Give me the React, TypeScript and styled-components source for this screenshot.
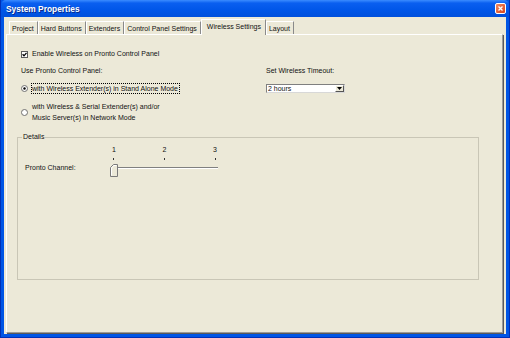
import React from "react";
import styled, { createGlobalStyle } from "styled-components";

const GlobalStyle = createGlobalStyle`
  html, body {
    margin: 0;
    padding: 0;
    width: 510px;
    height: 338px;
    overflow: hidden;
    background: #ece9d8;
  }
  body {
    font-family: "Liberation Sans", Arial, sans-serif;
    font-size: 7px;
    color: #111;
  }
`;

const tabs = [
  "Project",
  "Hard Buttons",
  "Extenders",
  "Control Panel Settings",
  "Wireless Settings",
  "Layout",
];

const CheckBox = ({ checked }: { checked: boolean }) => (
  <svg width="7" height="7" viewBox="0 0 7 7">
    <rect x="0.5" y="0.5" width="6" height="6" fill="#fff" stroke="#5a5a5a" />
    {checked && (
      <path d="M1.6 3.3 L3 4.8 L5.5 1.9" fill="none" stroke="#000" strokeWidth="1.3" />
    )}
  </svg>
);

const Radio = ({ checked }: { checked: boolean }) => (
  <svg width="7" height="7" viewBox="0 0 7 7">
    <circle cx="3.5" cy="3.5" r="3" fill="#fff" stroke="#707070" />
    {checked && <circle cx="3.5" cy="3.5" r="1.2" fill="#000" />}
  </svg>
);

const App = () => {
  return (
    <>
      <GlobalStyle />
      <Window>
        <TitleBar>
          <Title>System Properties</Title>
          <CloseButton>
            <svg width="5" height="5" viewBox="0 0 5 5">
              <path d="M0.5 0.5 L4.5 4.5 M4.5 0.5 L0.5 4.5" stroke="#fff" strokeWidth="1.3" />
            </svg>
          </CloseButton>
        </TitleBar>
        <Client>
          <TabStrip>
            {tabs.map((t) => (
              <Tab key={t} active={t === "Wireless Settings"}>
                {t}
              </Tab>
            ))}
          </TabStrip>
          <Panel>
            <Options>
              <CheckRow>
                <CheckBox checked />
                <span>Enable Wireless on Pronto Control Panel</span>
              </CheckRow>
              <Columns>
                <Column>
                  <Caption>Use Pronto Control Panel:</Caption>
                  <RadioRow gap={7}>
                    <Radio checked />
                    <FocusLabel>with Wireless Extender(s) in Stand Alone Mode</FocusLabel>
                  </RadioRow>
                  <RadioRow gap={8}>
                    <Radio checked={false} />
                    <MultiLabel>
                      with Wireless &amp; Serial Extender(s) and/or
                      <br />
                      Music Server(s) in Network Mode
                    </MultiLabel>
                  </RadioRow>
                </Column>
                <Column>
                  <Caption>Set Wireless Timeout:</Caption>
                  <Select>
                    <SelectValue>2 hours</SelectValue>
                    <DropButton>
                      <svg width="5" height="3" viewBox="0 0 5 3">
                        <path d="M0 0 H5 L2.5 3 Z" fill="#000" />
                      </svg>
                    </DropButton>
                  </Select>
                </Column>
              </Columns>
            </Options>
            <Group>
              <Legend>Details</Legend>
              <ChannelRow>
                <ChannelLabel>Pronto Channel:</ChannelLabel>
                <Slider>
                  <TickLabels>
                    <TickText>1</TickText>
                    <TickText>2</TickText>
                    <TickText>3</TickText>
                  </TickLabels>
                  <Ticks>
                    <Tick />
                    <Tick />
                    <Tick />
                  </Ticks>
                  <TrackArea>
                    <Track />
                    <Thumb>
                      <svg width="8" height="13" viewBox="0 0 8 13">
                        <path d="M0.5 12.5 V3.5 L3.5 0.5 H7.5 V12.5 Z" fill="#ece9d8" stroke="#7a7a7a" />
                        <path d="M1.5 11.5 V4 L3.8 1.5 H6.5" fill="none" stroke="#fff" />
                      </svg>
                    </Thumb>
                  </TrackArea>
                </Slider>
              </ChannelRow>
            </Group>
          </Panel>
        </Client>
      </Window>
    </>
  );
};

export default App;

const Window = styled.div`
  width: 510px;
  height: 338px;
  box-sizing: border-box;
  display: flex;
  flex-direction: column;
  padding: 0 3px 3px 3px;
  background: #0055e5;
  border-left: 1px solid #0030b8;
  border-right: 1px solid #0030b8;
  border-bottom: 1px solid #0030b8;
`;

const TitleBar = styled.div`
  height: 17px;
  flex: none;
  display: flex;
  align-items: center;
  justify-content: space-between;
  margin: 0 -3px;
  padding: 0 3px 0 5px;
  background: linear-gradient(#3b8cff 0%, #0a5ff0 18%, #0056e8 60%, #0050dc 100%);
  border-radius: 5px 5px 0 0;
`;

const Title = styled.span`
  color: #fff;
  font-weight: bold;
  font-size: 8.4px;
  text-shadow: 1px 1px 0 #0a2a8a;
`;

const CloseButton = styled.div`
  width: 9px;
  height: 9px;
  display: flex;
  align-items: center;
  justify-content: center;
  border: 1px solid #fff;
  border-radius: 2px;
  background: linear-gradient(135deg, #f08a62, #d8431a);
`;

const Client = styled.div`
  flex: 1;
  display: flex;
  flex-direction: column;
  background: #ece9d8;
  padding: 2px 3px 1px 2px;
`;

const TabStrip = styled.div`
  height: 15px;
  display: flex;
  align-items: flex-end;
  padding-left: 3px;
  position: relative;
  z-index: 1;
`;

const Tab = styled.div<{ active?: boolean }>`
  box-sizing: border-box;
  height: ${(p) => (p.active ? "16px" : "13px")};
  margin-bottom: ${(p) => (p.active ? "-1px" : "0")};
  padding: ${(p) => (p.active ? "0 4px 1px 5px" : "1px 3px 0 2px")};
  display: flex;
  align-items: center;
  line-height: 10px;
  white-space: nowrap;
  background: #ece9d8;
  border-top: 1px solid #fff;
  border-left: 1px solid #fff;
  border-right: 1px solid #8a8a8a;
`;

const Panel = styled.div`
  flex: 1;
  display: flex;
  flex-direction: column;
  padding-left: 10px;
  border-top: 1px solid #fff;
  border-left: 1px solid #fff;
  border-right: 1px solid #9a9a9a;
  border-bottom: 1px solid #9a9a9a;
  box-shadow: 1px 1px 0 #5a5a5a;
`;

const Options = styled.div`
  padding-left: 4px;
`;

const CheckRow = styled.div`
  margin-top: 14px;
  height: 10px;
  display: flex;
  align-items: center;
  gap: 4px;
  line-height: 10px;
`;

const Columns = styled.div`
  margin-top: 7px;
  display: grid;
  grid-template-columns: 245px 1fr;
`;

const Column = styled.div`
  display: flex;
  flex-direction: column;
  align-items: flex-start;
`;

const Caption = styled.div`
  line-height: 10px;
`;

const RadioRow = styled.div<{ gap: number }>`
  margin-top: ${(p) => p.gap}px;
  display: flex;
  align-items: center;
  gap: 3px;
`;

const FocusLabel = styled.span`
  border: 1px dotted #000;
  line-height: 9px;
  padding: 0 1px 0 0;
`;

const MultiLabel = styled.span`
  line-height: 10.6px;
  padding-left: 1px;
`;

const Select = styled.div`
  margin-top: 8px;
  box-sizing: border-box;
  width: 79px;
  height: 9px;
  display: flex;
  align-items: center;
  background: #fff;
  border: 1px solid #7f7f7f;
  border-right-color: #d8d8d8;
  border-bottom-color: #d8d8d8;
`;

const SelectValue = styled.span`
  flex: 1;
  padding-left: 1px;
  line-height: 7px;
`;

const DropButton = styled.div`
  box-sizing: border-box;
  width: 9px;
  height: 7px;
  display: flex;
  align-items: center;
  justify-content: center;
  background: #ece9d8;
  border: 1px solid #fff;
  border-right-color: #555;
  border-bottom-color: #555;
`;

const Group = styled.fieldset`
  box-sizing: border-box;
  margin: 9px 23px 0 0;
  padding: 3px 0 0 7px;
  height: 148px;
  border: 1px solid #c9c6b6;
  min-width: 0;
`;

const Legend = styled.legend`
  padding: 0 1px;
  margin-left: -3px;
  line-height: 10px;
`;

const ChannelRow = styled.div`
  display: grid;
  grid-template-columns: 86px 107px;
`;

const ChannelLabel = styled.div`
  margin-top: 18px;
  line-height: 10px;
`;

const Slider = styled.div`
  display: flex;
  flex-direction: column;
`;

const TickLabels = styled.div`
  display: flex;
  justify-content: space-between;
  line-height: 10px;
`;

const TickText = styled.span`
  width: 6px;
  text-align: center;
`;

const Ticks = styled.div`
  margin-top: 3px;
  height: 2px;
  display: flex;
  justify-content: space-between;
`;

const Tick = styled.span`
  width: 6px;
  height: 2px;
  background: linear-gradient(90deg, transparent 2.5px, #333 2.5px, #333 3.5px, transparent 3.5px);
`;

const TrackArea = styled.div`
  position: relative;
  height: 17px;
`;

const Track = styled.div`
  margin: 7px 0 0 3px;
  height: 0;
  border-top: 1px solid #808080;
  border-bottom: 1px solid #fff;
`;

const Thumb = styled.div`
  position: absolute;
  left: -1px;
  top: 4px;
  width: 8px;
  height: 13px;
  display: flex;
`;
